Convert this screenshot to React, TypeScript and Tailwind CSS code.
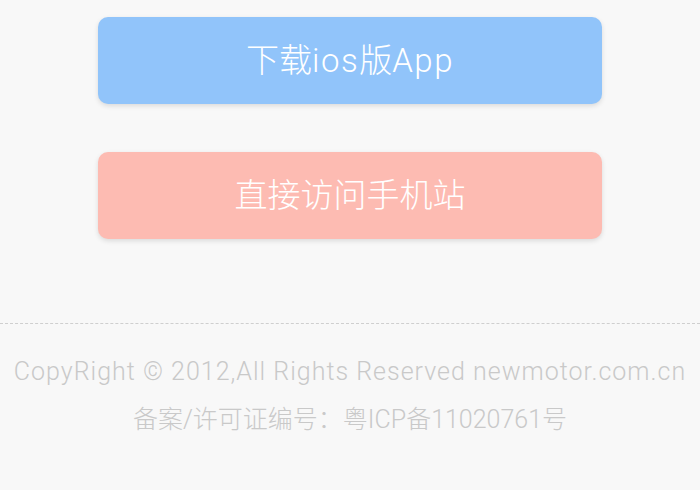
export default function App() {
  return (
    <div
      className="min-h-[490px] w-full bg-[#f8f8f8] overflow-hidden font-light"
      style={{ fontFamily: 'Roboto, "Noto Sans CJK SC", sans-serif' }}
    >
      <div className="flex flex-col items-center gap-[48px] pt-[17px]">
        <button className="w-[504px] h-[87px] rounded-[10px] bg-[#91c4fa] text-white text-[33px] font-light shadow-[0_2px_5px_rgba(0,0,0,0.12)]">
          下载<span className="tracking-[1.5px]">ios</span>版<span className="tracking-[1.5px]">App</span>
        </button>
        <button className="w-[504px] h-[87px] rounded-[10px] bg-[#fdbbb2] text-white text-[33px] font-light shadow-[0_2px_5px_rgba(0,0,0,0.12)]">
          直接访问手机站
        </button>
      </div>
      <div className="mt-[84px] border-t border-dashed border-[#cfcfcf]" />
      <div className="pt-[24px] flex flex-col items-center text-[#c9c9c9] text-[25px] leading-[48px]">
        <p className="tracking-[1px] whitespace-nowrap">CopyRight © 2012,All Rights Reserved newmotor.com.cn</p>
        <p className="whitespace-nowrap">备案/许可证编号：粤ICP备11020761号</p>
      </div>
    </div>
  );
}
